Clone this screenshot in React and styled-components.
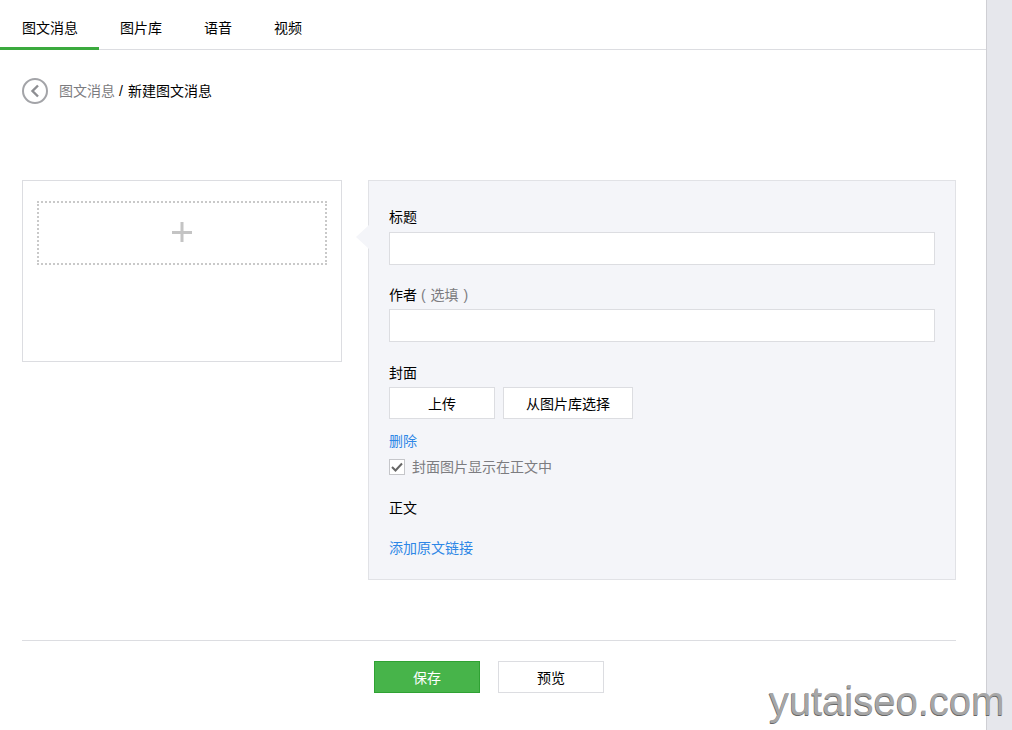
import React from 'react'
import styled, { createGlobalStyle } from 'styled-components'

const GlobalStyle = createGlobalStyle`
  * { box-sizing: border-box; }
  html, body { margin: 0; height: 100%; overflow: hidden; background: #fff; }
  body {
    font-family: "Liberation Sans", "Noto Sans CJK SC", sans-serif;
    font-size: 14px;
    color: #000;
  }
`

const Page = styled.div`
  position: relative;
  display: flex;
  width: 1012px;
  height: 730px;
  overflow: hidden;
`

const Main = styled.div`
  width: 986px;
`

const Scrollbar = styled.div`
  width: 26px;
  background: #e6e7ec;
  border-left: 1px solid #cfcfd4;
`

const Tabs = styled.nav`
  display: flex;
  height: 50px;
  border-bottom: 1px solid #dcdde1;
`

const Tab = styled.a`
  height: 50px;
  line-height: 56px;
  padding: 0 21px;
  border-bottom: 3px solid ${props => (props.$active ? '#3baa3e' : 'transparent')};
  &:first-child { padding-left: 22px; }
`

const Breadcrumb = styled.div`
  display: flex;
  align-items: center;
  margin: 28px 0 0 22px;
  height: 26px;
`

const BackButton = styled.span`
  display: flex;
  align-items: center;
  justify-content: center;
  width: 26px;
  height: 26px;
  border: 2px solid #a3a4a8;
  border-radius: 50%;
  margin-right: 11px;
`

const Crumbs = styled.div`
  margin-top: -3px;
`

const CrumbLink = styled.span`
  color: #7c7c80;
`

const CrumbSeparator = styled.span`
  margin: 0 5px 0 4px;
`

const Editor = styled.div`
  display: flex;
  align-items: flex-start;
  gap: 26px;
  margin: 76px 30px 0 22px;
`

const PreviewCard = styled.div`
  width: 320px;
  height: 182px;
  padding: 20px 14px 0;
  background: #fff;
  border: 1px solid #dcdde1;
`

const AddBox = styled.div`
  display: flex;
  align-items: center;
  justify-content: center;
  height: 64px;
  padding-bottom: 3px;
  border: 2px dotted #c9c9c9;
`

const FormPanel = styled.div`
  position: relative;
  width: 588px;
  height: 400px;
  padding: 27px 20px 0;
  background: #f4f5f9;
  border: 1px solid #e1e2e6;
`

const PanelArrow = styled.span`
  position: absolute;
  left: -13px;
  top: 44px;
  width: 13px;
  height: 24px;
  background: #f4f5f9;
  clip-path: polygon(100% 0, 0 50%, 100% 100%);
`

const Label = styled.div`
  height: 20px;
  line-height: 18px;
  margin-bottom: ${props => props.$gap}px;
`

const Hint = styled.span`
  color: #7c7c80;
  margin-left: 4px;
  word-spacing: 1px;
`

const TextInput = styled.input`
  display: block;
  width: 546px;
  height: 33px;
  margin-bottom: ${props => props.$gap || 0}px;
  background: #fff;
  border: 1px solid #dcdde1;
  outline: none;
`

const ButtonRow = styled.div`
  display: flex;
  gap: 8px;
`

const Button = styled.button`
  width: ${props => props.$width || 106}px;
  height: 32px;
  padding: 0;
  font: inherit;
  color: ${props => (props.$primary ? '#fff' : '#000')};
  background: ${props => (props.$primary ? '#47b44a' : '#fff')};
  border: 1px solid ${props => (props.$primary ? '#2fa233' : '#dcdde1')};
`

const TextLink = styled.a`
  display: block;
  margin-top: ${props => props.$top}px;
  color: #2e87e6;
  line-height: 20px;
`

const CheckRow = styled.label`
  display: flex;
  align-items: center;
  gap: 7px;
  height: 16px;
  margin-top: 8px;
  color: #7c7c80;
`

const CheckBox = styled.span`
  display: flex;
  align-items: center;
  justify-content: center;
  width: 16px;
  height: 16px;
  background: #fff;
  border: 1px solid #c5c6ca;
`

const CheckText = styled.span`
  margin-top: -3px;
`

const SectionTitle = styled.div`
  margin-top: 23px;
  line-height: 20px;
`

const Footer = styled.div`
  margin: 60px 30px 0 22px;
  padding-top: 20px;
  display: flex;
  justify-content: center;
  gap: 18px;
  border-top: 1px solid #dcdde1;
`

const Watermark = styled.div`
  position: absolute;
  left: 769px;
  top: 677px;
  font-size: 40px;
  line-height: 48px;
  color: #a6a6a6;
  text-shadow: -0.5px 0.5px 0.5px #666;
`

export default function App() {
  return (
    <Page>
      <GlobalStyle />
      <Main>
        <Tabs>
          <Tab $active>图文消息</Tab>
          <Tab>图片库</Tab>
          <Tab>语音</Tab>
          <Tab>视频</Tab>
        </Tabs>

        <Breadcrumb>
          <BackButton>
            <svg width="10" height="14" viewBox="0 0 10 14">
              <path d="M8 1.500L2.500 7 8 12.500" fill="none" stroke="#8d8e92" strokeWidth="2.400" />
            </svg>
          </BackButton>
          <Crumbs>
            <CrumbLink>图文消息</CrumbLink>
            <CrumbSeparator>/</CrumbSeparator>
            新建图文消息
          </Crumbs>
        </Breadcrumb>

        <Editor>
          <PreviewCard>
            <AddBox>
              <svg width="20" height="20" viewBox="0 0 20 20">
                <path d="M0 9h20v3H0zM8.500 0h3v20h-3z" fill="#c4c4c4" />
              </svg>
            </AddBox>
          </PreviewCard>

          <FormPanel>
            <PanelArrow />
            <Label $gap={4}>标题</Label>
            <TextInput $gap={21} />
            <Label $gap={3}>
              作者<Hint>( 选填 )</Hint>
            </Label>
            <TextInput $gap={22} />
            <Label $gap={3}>封面</Label>
            <ButtonRow>
              <Button>上传</Button>
              <Button $width={130}>从图片库选择</Button>
            </ButtonRow>
            <TextLink $top={12}>删除</TextLink>
            <CheckRow>
              <CheckBox>
                <svg width="12" height="10" viewBox="0 0 12 10">
                  <path d="M1 5l3.500 3.500L11 1.500" fill="none" stroke="#666" strokeWidth="2" />
                </svg>
              </CheckBox>
              <CheckText>封面图片显示在正文中</CheckText>
            </CheckRow>
            <SectionTitle>正文</SectionTitle>
            <TextLink $top={20}>添加原文链接</TextLink>
          </FormPanel>
        </Editor>

        <Footer>
          <Button $primary>保存</Button>
          <Button>预览</Button>
        </Footer>
      </Main>
      <Scrollbar />
      <Watermark>yutaiseo.com</Watermark>
    </Page>
  )
}
